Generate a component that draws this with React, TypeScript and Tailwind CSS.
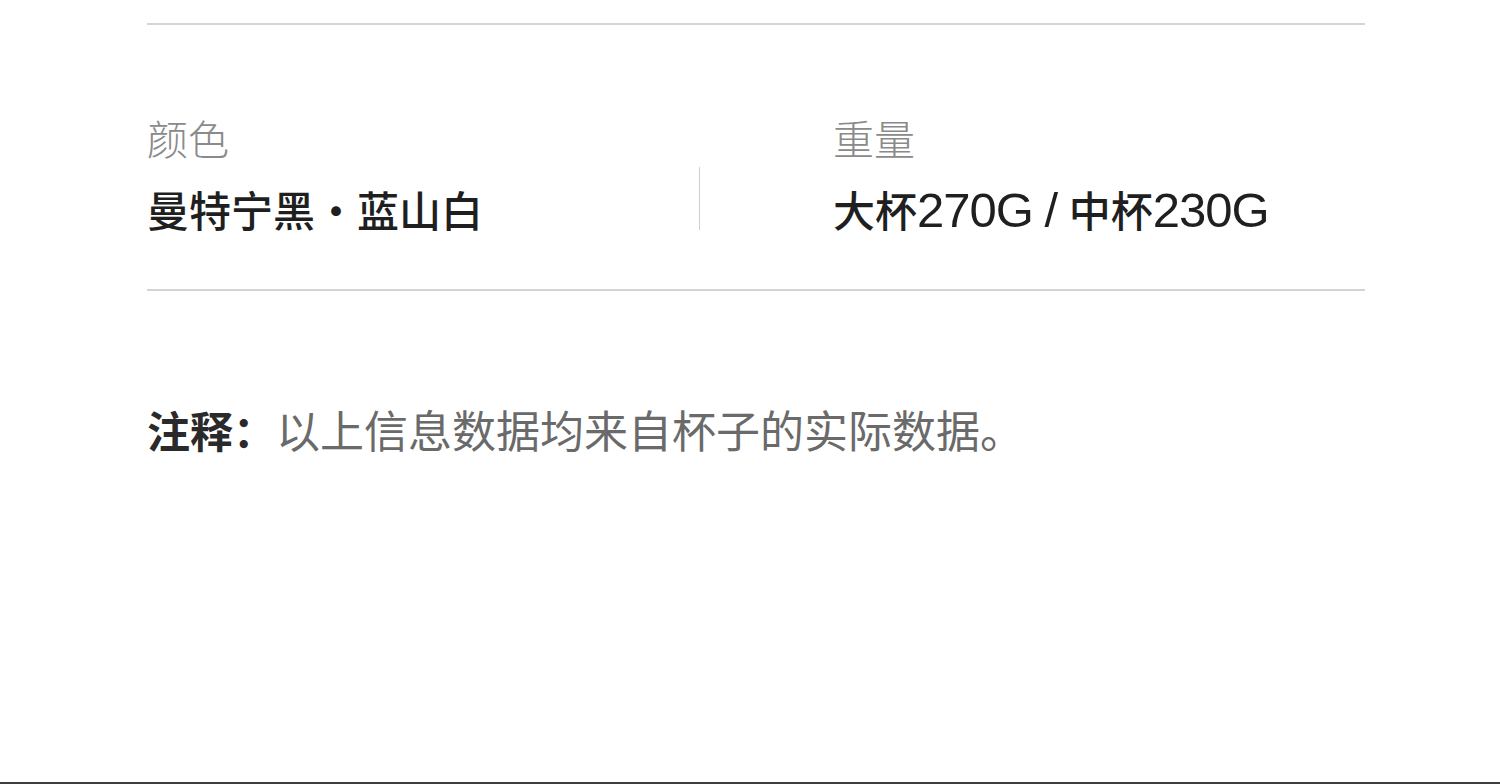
import React from "react";

const font = {
  fontFamily: '"Liberation Sans", "Noto Sans CJK SC", sans-serif',
};

interface SpecProps {
  label: string;
  children: React.ReactNode;
}

const Spec: React.FC<SpecProps> = ({ label, children }) => {
  return (
    <div className="flex flex-col">
      <div className="text-[41px] leading-none font-light text-[#8a8a8a]">{label}</div>
      <div className="mt-[30px] h-[42px] text-[42px] leading-none font-medium text-[#1f1f1f] whitespace-nowrap">
        {children}
      </div>
    </div>
  );
};

// latin part of the value is drawn a bit larger than the CJK glyphs
const Num: React.FC<{ children: React.ReactNode }> = ({ children }) => (
  <span className="text-[49px] leading-[35px] tracking-[-1px]">{children}</span>
);

const App: React.FC = () => {
  return (
    <div
      className="flex h-[784px] w-[1500px] flex-col overflow-hidden border-b-2 border-[#3d3d3d] bg-white"
      style={font}
    >
      <div className="ml-[147px] mt-[23px] w-[1218px]">
        <div className="border-t-2 border-[#d4d4d4]" />
        <div className="flex h-[264px] items-start pt-[96px]">
          <div className="w-[552px]">
            <Spec label="颜色">曼特宁黑・蓝山白</Spec>
          </div>
          <div className="mt-[46px] h-[63px] w-px bg-[#cfcfcf]" />
          <div className="pl-[133px]">
            <Spec label="重量">
              大杯<Num>270G</Num> <Num>/</Num> 中杯<Num>230G</Num>
            </Spec>
          </div>
        </div>
        <div className="border-t-2 border-[#d4d4d4]" />
        <p className="mt-[120px] text-[44px] leading-none text-[#6a6a6a]">
          <span className="text-[43px] font-bold text-[#2a2a2a]">注释：</span>
          以上信息数据均来自杯子的实际数据。
        </p>
      </div>
    </div>
  );
};

export default App;
